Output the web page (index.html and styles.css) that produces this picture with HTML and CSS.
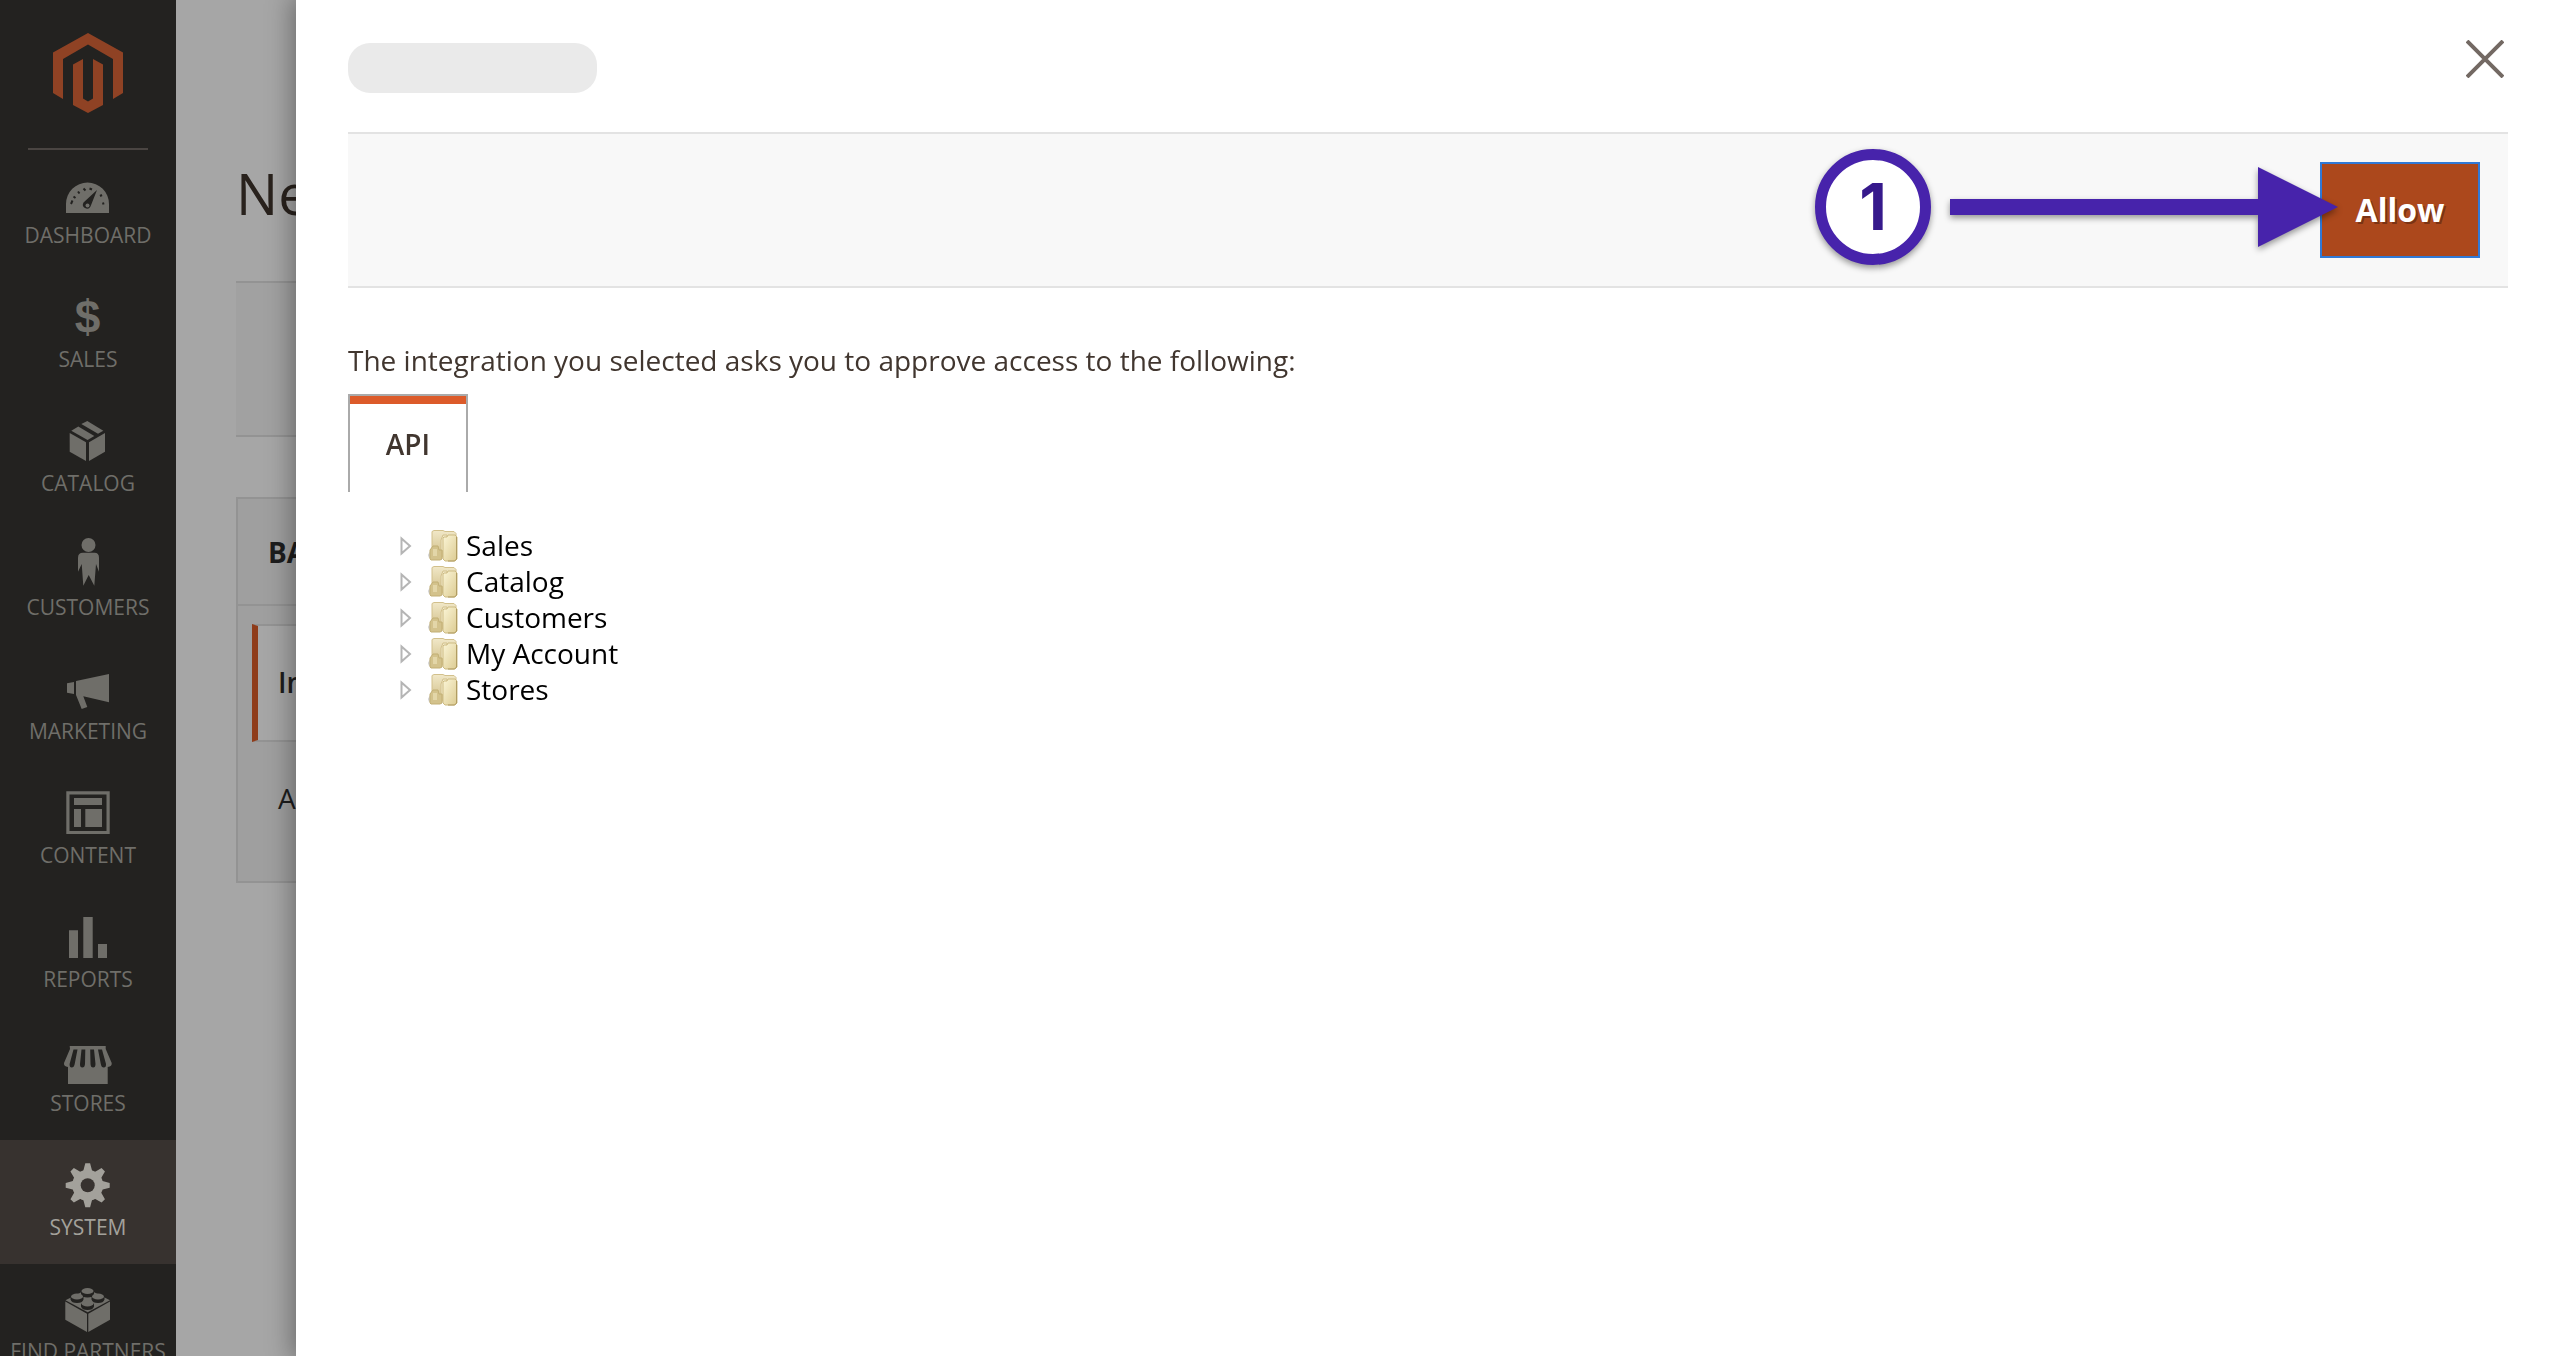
FILE: index.html
```html
<!DOCTYPE html>
<html lang="en">
<head>
    <meta charset="UTF-8">
    <meta name="viewport" content="width=device-width, initial-scale=1.0">
    <title>New Integration / Magento Admin</title>
    <link rel="stylesheet" href="styles.css">
</head>
<body>
    <div class="admin">
        <nav class="menu">
            <a class="logo" href="#" aria-label="Magento Admin">
                <svg width="72" height="82" viewBox="52 32 72 82">
                    <path d="M88 33l35 19.500v40.500l-10 6V59L88 44.500 63 59v40l-10-6V52.500z"/>
                    <path d="M73 64.500L83 59v39.500l5 3 5-3V59l10 5.500V105l-15 8-15-8z"/>
                </svg>
            </a>
            <a class="menu-item" href="#">
                <svg class="icon" viewBox="0 0 56 56">
                    <path d="M6 48V39a21.500 21.500 0 0 1 43 0v9z"/>
                    <path class="cut" d="M37 25L30.500 41.500a4 4 0 0 1-7-4z"/>
                    <circle cx="27.500" cy="40.500" r="2"/>
                    <path class="cut-line" d="M11 39l1.500-3.500M13.500 31.500l2 1.500M18 26.500l1.500 2M23.500 23.500l2 2M29.500 23.500l2.500 1M40 31l2-1M43 37.500l.5 2"/>
                </svg>
                <span>DASHBOARD</span>
            </a>
            <a class="menu-item" href="#">
                <svg class="icon" viewBox="0 0 56 56"><text class="dollar" x="27.500" y="44">$</text></svg>
                <span>SALES</span>
            </a>
            <a class="menu-item" href="#">
                <svg class="icon" viewBox="0 0 56 56">
                    <path d="M27.300 8l16 9.700-5.300 3L21.300 11z"/>
                    <path d="M18.300 13.500l16 9.500-6.700 4-16.300-9.300z"/>
                    <path d="M9.700 20L26 29.300V48L9.700 38.700z"/>
                    <path d="M45 20l-16 9.300V48l16-9.300z"/>
                </svg>
                <span>CATALOG</span>
            </a>
            <a class="menu-item" href="#">
                <svg class="icon" viewBox="0 0 56 56">
                    <circle cx="28.500" cy="8" r="7"/>
                    <path d="M23 15.700h11.500q4.500 0 4.500 5v14L36 27l-1.700 21.700L28.700 38l-5.400 10.700L21.700 27 18 34.700v-14q0-5 5-5z"/>
                </svg>
                <span>CUSTOMERS</span>
            </a>
            <a class="menu-item" href="#">
                <svg class="icon" viewBox="0 0 56 56">
                    <path d="M7 22.300L14 21v12l-7-1.300z"/>
                    <path d="M16 20l33-7v28.300l-25.700-6 4 10.700-5.600 2L16 34z"/>
                </svg>
                <span>MARKETING</span>
            </a>
            <a class="menu-item" href="#">
                <svg class="icon" viewBox="0 0 56 56">
                    <path fill-rule="evenodd" d="M6.300 6.300h43.400V49H6.300zM9.500 9.500V46h37V9.500z"/>
                    <path d="M14 13h28v7H14zM14 24h7v18h-7zM25.300 24H42v18H25.300z"/>
                </svg>
                <span>CONTENT</span>
            </a>
            <a class="menu-item" href="#">
                <svg class="icon" viewBox="0 0 56 56"><path d="M9 21.300h9V49H9zM23.300 8h9.400v41h-9.400zM38 35h9v14h-9z"/></svg>
                <span>REPORTS</span>
            </a>
            <a class="menu-item" href="#">
                <svg class="icon" viewBox="0 0 56 56">
                    <path d="M9.700 13h36v3l6 14q.5 3.500-4 4V51H8V34q-4.500-.5-4-4l6-14z"/>
                    <path class="cut" d="M13.500 16.500h4L14.700 31q-.7 3.500-3 3.500T9.600 31zM21.500 16.500h3.800L25 31q-.3 3.500-2.700 3.500T20 31zM30.200 16.500H34L35.500 31q0 3.500-2.400 3.500T30.500 31zM38 16.500h4L46 31q.2 3.500-2.200 3.500T40.800 31z"/>
                </svg>
                <span>STORES</span>
            </a>
            <a class="menu-item active" href="#">
                <svg class="icon" viewBox="0 0 56 56">
                    <g id="gear">
                        <path id="teeth" d="M25.300 6.300h4.800l2.400 9h-9.600zM25.300 50.300h4.800l2.400-9h-9.600z"/>
                        <use href="#teeth" transform="rotate(45 27.700 28.300)"/>
                        <use href="#teeth" transform="rotate(90 27.700 28.300)"/>
                        <use href="#teeth" transform="rotate(135 27.700 28.300)"/>
                        <circle cx="27.700" cy="28.300" r="15.500"/>
                    </g>
                    <circle class="cut" cx="27.700" cy="28.300" r="7"/>
                </svg>
                <span>SYSTEM</span>
            </a>
            <a class="menu-item" href="#">
                <svg class="icon" viewBox="0 0 56 56">
                    <path d="M27.700 8L50 19.300 27.700 31.300 5.500 19.300z"/>
                    <path d="M5.300 20.500L27 32.700V51L5.300 38.700zM50 20.500L28.300 32.700V51L50 38.700z"/>
                    <g class="cut">
                        <path d="M21 10h13v3q-1 3.500-6.500 3.500T21 13zM10.500 15.500h13v3q-1 3.500-6.500 3.500t-6.500-3.500zM31.500 15.500h13v3q-1 3.500-6.500 3.500t-6.500-3.500zM21 22.500h13v3q-1 3.500-6.500 3.500T21 25.500z"/>
                    </g>
                    <ellipse cx="27.500" cy="10" rx="6" ry="3"/>
                    <ellipse cx="17" cy="15.500" rx="6" ry="3"/>
                    <ellipse cx="38" cy="15.500" rx="6" ry="3"/>
                    <ellipse cx="27.500" cy="22.500" rx="6" ry="3"/>
                </svg>
                <span>FIND PARTNERS</span>
            </a>
        </nav>

        <main class="page">
            <h1>New Integration</h1>
            <div class="page-actions"></div>
            <div class="tabs">
                <h2>BASIC SETTINGS</h2>
                <ul>
                    <li><a class="current" href="#">Integration Info</a></li>
                    <li><a href="#">API</a></li>
                </ul>
            </div>
        </main>
    </div>

    <section class="modal" role="dialog" aria-label="Approve access">
        <header class="modal-header">
            <div class="name-mask"></div>
            <button class="close" type="button" aria-label="Close">
                <svg width="38" height="38" viewBox="0 0 38 38"><path d="M1 1l36 36M37 1l-36 36"/></svg>
            </button>
        </header>

        <div class="modal-actions">
            <button class="allow" type="button">Allow</button>
            <!-- step marker pointing at the Allow button -->
            <div class="callout">
                <span class="step">1</span>
                <svg class="arrow" width="388" height="80" viewBox="0 0 388 80"><path d="M0 32h308V0l80 40-80 40V48H0z"/></svg>
            </div>
        </div>

        <div class="modal-content">
            <p>The integration you selected asks you to approve access to the following:</p>
            <a class="api-tab" href="#">API</a>
            <ul class="tree">
                <li><svg class="expand" viewBox="0 0 12 20"><path d="M1.500 2.500v15l8.500-7.500z"/></svg><svg class="folder" viewBox="0 0 30 32"><use href="#folder"/></svg><span>Sales</span></li>
                <li><svg class="expand" viewBox="0 0 12 20"><path d="M1.500 2.500v15l8.500-7.500z"/></svg><svg class="folder" viewBox="0 0 30 32"><use href="#folder"/></svg><span>Catalog</span></li>
                <li><svg class="expand" viewBox="0 0 12 20"><path d="M1.500 2.500v15l8.500-7.500z"/></svg><svg class="folder" viewBox="0 0 30 32"><use href="#folder"/></svg><span>Customers</span></li>
                <li><svg class="expand" viewBox="0 0 12 20"><path d="M1.500 2.500v15l8.500-7.500z"/></svg><svg class="folder" viewBox="0 0 30 32"><use href="#folder"/></svg><span>My Account</span></li>
                <li><svg class="expand" viewBox="0 0 12 20"><path d="M1.500 2.500v15l8.500-7.500z"/></svg><svg class="folder" viewBox="0 0 30 32"><use href="#folder"/></svg><span>Stores</span></li>
            </ul>
        </div>
    </section>

    <svg class="defs" width="0" height="0" aria-hidden="true">
        <defs>
            <linearGradient id="back" x1="0" y1="0" x2="0" y2="1">
                <stop offset="0" stop-color="#f1e8c8"/>
                <stop offset="1" stop-color="#d0be88"/>
            </linearGradient>
            <linearGradient id="front" x1="0" y1="0" x2="1" y2="1">
                <stop offset="0" stop-color="#fbf5d6"/>
                <stop offset="1" stop-color="#dccb92"/>
            </linearGradient>
            <g id="folder">
                <path d="M0 25l3-6v9H1z" fill="#d0d0d0"/>
                <path d="M4 1.500L6 .5h9l2 1h9l2 2V27H4z" fill="url(#back)" stroke="#d2c08c"/>
                <path d="M13 10l2-5h4v4l-4 12h-2z" fill="#f3ebcb" stroke="#d2c08c"/>
                <path d="M2 20l3-4h5l1 4h3v9l-2 1H3l-1-1z" fill="#d3c28c" stroke="#c2af75"/>
                <path d="M5 19h4v7H5z" fill="#e3d6a8"/>
                <path d="M15 8l1-1h3l1-2h7l2 2v22l-2 2H17l-2-2z" fill="url(#front)" stroke="#cdbb83"/>
                <path d="M28.500 7v22l-2 2H20" fill="none" stroke="#b09c62"/>
            </g>
        </defs>
    </svg>
</body>
</html>
```

FILE: styles.css
```css
* {
    box-sizing: border-box;
}
body {
    margin: 0;
    height: 100vh;
    overflow: hidden;
    font-family: 'Open Sans', 'Noto Sans', sans-serif;
    font-size: 28px;
    line-height: 38px;
    color: #41362f;
    background-color: #a6a6a6;
}
ul {
    list-style: none;
    margin: 0;
    padding: 0;
}
a {
    color: inherit;
    text-decoration: none;
}
.admin {
    display: flex;
    height: 100vh;
    overflow: hidden;
}

/* Left menu */
.menu {
    flex: 0 0 176px;
    background-color: #232220;
    color: #6f6e69;
    --bg: #232220;
}
.logo {
    display: flex;
    justify-content: center;
    height: 150px;
    margin: 0 28px -2px;
    padding-top: 32px;
    border-bottom: 2px solid #4a4542;
}
.logo svg {
    fill: #8f4224;
}
.menu-item {
    display: flex;
    flex-direction: column;
    align-items: center;
    height: 124px;
    padding-top: 17px;
    font-size: 21px;
    line-height: 29px;
    text-align: center;
    white-space: nowrap;
}
.menu-item.active {
    background-color: #37322f;
    color: #a3a19b;
    --bg: #37322f;
}
.icon {
    flex: none;
    width: 56px;
    height: 56px;
    fill: currentColor;
}
.cut {
    fill: var(--bg);
}
.cut-line {
    fill: none;
    stroke: var(--bg);
    stroke-width: 2;
}
.dollar {
    font: bold 46px 'Liberation Sans', sans-serif;
    text-anchor: middle;
}

/* Page under the overlay */
.page {
    flex: 1;
    padding: 155px 60px 0;
    color: #1d1d1d;
}
.page h1 {
    margin: 0;
    font-size: 56px;
    font-weight: 400;
    line-height: 76px;
    color: #29221d;
}
.page-actions {
    height: 156px;
    margin: 50px 0 60px;
    background-color: #a1a1a1;
    border-top: 2px solid #939393;
    border-bottom: 2px solid #939393;
}
.tabs {
    width: 480px;
    height: 386px;
    background-color: #9f9f9f;
    border: 2px solid #939393;
}
.tabs h2 {
    margin: 0;
    padding: 34px 30px 33px;
    font-size: 28px;
    font-weight: 700;
    line-height: 38px;
    border-bottom: 2px solid #939393;
}
.tabs ul {
    padding: 18px 0 0 14px;
}
.tabs li a {
    display: block;
    padding: 37px 26px;
}
.tabs li .current {
    padding: 37px 20px 39px;
    font-weight: 600;
    background-color: #a6a6a6;
    border: 2px solid #939393;
    border-left: 6px solid #8f3c1a;
}

/* Slide-out modal */
.modal {
    position: fixed;
    top: 0;
    right: 0;
    bottom: 0;
    left: 296px;
    padding: 0 52px;
    background-color: #fff;
    box-shadow: 0 0 24px 4px rgba(0, 0, 0, 0.35);
}
.modal-header {
    display: flex;
    justify-content: space-between;
    align-items: flex-start;
    height: 132px;
    padding-top: 40px;
}
.name-mask {
    width: 249px;
    height: 50px;
    margin-top: 3px;
    border-radius: 22px;
    background-color: #eaeaea;
}
.close {
    height: 38px;
    margin-right: 4px;
    padding: 0;
    border: none;
    background: none;
    cursor: pointer;
}
.close svg {
    display: block;
    fill: none;
    stroke: #736963;
    stroke-width: 4;
}
.modal-actions {
    position: relative;
    display: flex;
    justify-content: flex-end;
    align-items: flex-start;
    height: 156px;
    padding: 28px;
    background-color: #f8f8f8;
    border-top: 2px solid #e3e3e3;
    border-bottom: 2px solid #e3e3e3;
}
.allow {
    width: 160px;
    height: 96px;
    padding: 0 0 2px;
    border: 2px solid #3079d6;
    background-color: #ac481c;
    color: #fff;
    font-family: inherit;
    font-size: 32px;
    font-weight: 700;
    text-shadow: 2px 2px 0 rgba(0, 0, 0, 0.3);
    cursor: pointer;
}
.callout {
    position: absolute;
    top: 15px;
    right: 170px;
    display: flex;
    align-items: center;
    gap: 19px;
    filter: drop-shadow(0 3px 3px rgba(0, 0, 0, 0.4));
    pointer-events: none;
}
.step {
    display: flex;
    align-items: center;
    justify-content: center;
    width: 116px;
    height: 116px;
    border: 11px solid #4723ab;
    border-radius: 50%;
    background-color: #fff;
    color: #36198c;
    font-family: Inter, Roboto, sans-serif;
    font-size: 64px;
    font-weight: 700;
}
.arrow {
    fill: #4723ab;
}
.modal-content {
    padding-top: 53px;
}
.modal-content p {
    margin: 0 0 15px;
}
.api-tab {
    display: block;
    width: 120px;
    height: 98px;
    padding-top: 20px;
    border: 2px solid #aaa;
    border-bottom: none;
    box-shadow: inset 0 8px 0 #dc5b2a;
    font-weight: 600;
    line-height: 56px;
    text-align: center;
}
.tree {
    padding: 36px 0 0 52px;
    color: #000;
}
.tree li {
    display: flex;
    align-items: center;
    height: 36px;
    line-height: 36px;
}
.tree span {
    padding-bottom: 2px;
}
.expand {
    width: 12px;
    height: 20px;
    margin-right: 16px;
    fill: #fff;
    stroke: #b5b5b5;
    stroke-width: 2;
}
.folder {
    width: 30px;
    height: 32px;
    margin-right: 8px;
}
.defs {
    position: absolute;
}
```
